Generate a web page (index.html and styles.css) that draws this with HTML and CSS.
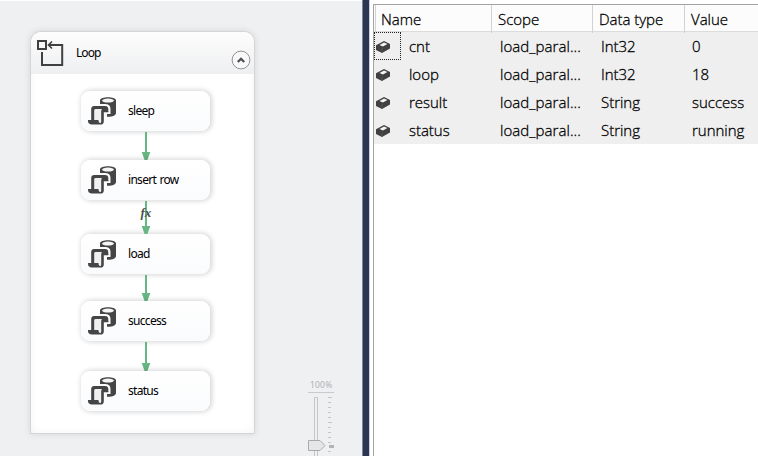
FILE: index.html
```
<!DOCTYPE html>
<html lang="en">
<head>
<meta charset="utf-8">
<title>Loop</title>
<link rel="stylesheet" href="styles.css">
</head>
<body>
<svg class="defs" width="0" height="0">
  <symbol id="task" viewBox="0 0 30 30">
    <path d="M12 4.5C12 .3 28 .3 28 4.5V17C28 19.5 24 21 19 20.7V15.5H21V10H12Z" fill="#454545"/>
    <ellipse cx="20" cy="4.6" rx="6" ry="2" fill="#f5f5f5"/>
    <path d="M9 9H17Q21.5 9 21.5 13V17H17" stroke="#fcfcfd" stroke-width="2" fill="none"/>
    <path d="M6 24V13Q6 11.5 8 11.5H16.5Q14.5 12.5 14.5 15V25.5Q14.5 28 12.5 28Q11 28 10.5 24Z" fill="#f0f0f1"/>
    <path d="M3.2 24V13Q3.2 10 6.2 10H17Q20.3 10 20.3 13V16.2H15.8V25.5Q15.8 28.6 12.5 28.6H4Q0 28.6 0 24.8V24H10.5Q10.5 27 12.3 27Q13.2 27 13.2 25.5V15Q13.2 13.8 14 13H8Q6.2 13 6.2 14V24Z" fill="#454545"/>
  </symbol>
  <symbol id="cube" viewBox="0 0 14 12">
    <path d="M0 4.2L8 0L14 3V7.5L6 12L0 9Z" fill="#414141"/>
    <path d="M3.5 3.9L8 1.5L11.4 3.1L6.9 5.4Z" fill="#f4f4f4"/>
    <path d="M6 7V12" stroke="#666" stroke-width=".6"/>
  </symbol>
</svg>
<main class="app">
  <section class="canvas">
    <div class="loop">
      <header class="loop-head">
        <svg class="loop-icon" width="27" height="27" viewBox="0 0 27 27" fill="none" stroke="#404040">
          <path d="M1 1H9V9H1Z M5 12V25H25.2V5H12" stroke-width="2"/>
          <path d="M15 1.5L11.5 5L15 8.5" stroke-width="1.6"/>
        </svg>
        <span class="loop-title">Loop</span>
        <svg class="collapse" width="20" height="20" viewBox="0 0 20 20" fill="none">
          <circle cx="10" cy="10" r="8.9" fill="#f8f8f9" stroke="#929294"/>
          <path d="M6.8 12L10 8.8L13.2 12" stroke="#505055" stroke-width="2.3"/>
        </svg>
      </header>
      <div class="flow">
        <div class="node"><svg class="task"><use href="#task"/></svg><span>sleep</span></div>
        <svg class="link" width="10" height="29" viewBox="0 0 10 29"><path d="M4 1H6V21H9.3L6.4 29H3.6L.7 21H4Z"/></svg>
        <div class="node"><svg class="task"><use href="#task"/></svg><span class="spaced">insert row</span></div>
        <div class="link-fx">
          <svg class="link" width="10" height="34" viewBox="0 0 10 34"><path d="M4 1H6V26H9.3L6.4 34H3.6L.7 26H4Z"/></svg>
          <span class="fx">fx</span>
        </div>
        <div class="node"><svg class="task"><use href="#task"/></svg><span>load</span></div>
        <svg class="link" width="10" height="27" viewBox="0 0 10 27"><path d="M4 1H6V19H9.3L6.4 27H3.6L.7 19H4Z"/></svg>
        <div class="node"><svg class="task"><use href="#task"/></svg><span>success</span></div>
        <svg class="link" width="10" height="30" viewBox="0 0 10 30"><path d="M4 1H6V22H9.3L6.4 30H3.6L.7 22H4Z"/></svg>
        <div class="node"><svg class="task"><use href="#task"/></svg><span>status</span></div>
      </div>
    </div>
    <div class="zoom">
      <span class="zoom-label">100%</span>
      <svg width="28" height="66" viewBox="0 0 28 66" fill="none">
        <path d="M0 2.5H26" stroke="#c9cacb"/>
        <path d="M6.5 70V7.5H9.5V70" stroke="#c5c6c7"/>
        <path d="M20 7.5H24M20 12.5H23M20 17.5H23M20 22.5H23M20 27.5H23M20 32.5H24M20 37.5H23M20 42.5H23M20 47.5H23M20 52.5H23M20 61.5H23" stroke="#c5c6c7"/>
        <path d="M21 56.5H26" stroke="#b2b3b4" stroke-width="3"/>
        <path d="M.5 50.5H12L17 55.5L12 60.5H.5Z" fill="#e5e6e7" stroke="#a9aaab"/>
      </svg>
    </div>
  </section>
  <div class="splitter"></div>
  <section class="locals">
    <div class="row head"><span>Name</span><span>Scope</span><span>Data type</span><span>Value</span></div>
    <div class="row"><span class="cell-name"><i class="focus"><svg class="cube"><use href="#cube"/></svg></i><b>cnt</b></span><span class="scope">load_paral...</span><span>Int32</span><span>0</span></div>
    <div class="row"><span class="cell-name"><i><svg class="cube"><use href="#cube"/></svg></i><b>loop</b></span><span class="scope">load_paral...</span><span>Int32</span><span>18</span></div>
    <div class="row"><span class="cell-name"><i><svg class="cube"><use href="#cube"/></svg></i><b>result</b></span><span class="scope">load_paral...</span><span>String</span><span>success</span></div>
    <div class="row"><span class="cell-name"><i><svg class="cube"><use href="#cube"/></svg></i><b>status</b></span><span class="scope">load_paral...</span><span>String</span><span>running</span></div>
  </section>
</main>
</body>
</html>
```
FILE: styles.css
```
* { box-sizing: border-box; }
body { margin: 0; background: #fff; color: #000; font-family: "Open Sans", "Noto Sans", sans-serif; }
.defs { position: absolute; }
.app { display: flex; width: 758px; height: 456px; overflow: hidden; }
.canvas { display: flex; width: 362px; flex: none; background: #eff0f2; border-top: 1px solid #fff; padding: 30px 0 0 30px; }
.loop { width: 225px; height: 403px; flex: none; border: 1px solid #d5d5d6; border-radius: 11px 11px 0 0; background: #fff; box-shadow: 0 0 7px rgba(0,0,0,.11), inset 0 0 8px rgba(0,0,0,.05); overflow: hidden; }
.loop-head { display: flex; height: 42px; padding: 8px 3px 0 6px; background: linear-gradient(#fdfdfd, #eeeff1); }
.loop-icon { flex: none; }
.loop-title { margin: 4px auto 0 12px; font: 11.5px/18px "Noto Sans", sans-serif; letter-spacing: -.95px; color: #000; }
.collapse { margin-top: 10px; }
.flow { display: flex; flex-direction: column; align-items: center; padding: 17px 0 0 6px; }
.node { display: flex; align-items: center; width: 129px; height: 40px; padding-left: 7px; border-radius: 9px; background: linear-gradient(#fff, #fafbfd); box-shadow: 1px 0 5px 1px rgba(0,0,0,.17); font: 11.5px/18px "Noto Sans", sans-serif; letter-spacing: -.7px; color: #000; }
.node span { margin: 0 0 1px 10px; }
.node .spaced { letter-spacing: -.7px; word-spacing: 1px; }
.node span:not(.spaced) { letter-spacing: -.7px; }
.loop-title, .node span { font-size: 12px; }
.task { width: 30px; height: 30px; flex: none; }
.link { display: block; flex: none; fill: #66b783; }
.link-fx { position: relative; height: 34px; }
.fx { position: absolute; left: 0; top: 4px; font: italic bold 13px/18px "Liberation Serif", serif; color: #4a4f4c; }
.zoom { display: flex; flex-direction: column; align-self: flex-end; width: 28px; margin-left: 53px; }
.zoom-label { margin-left: 2px; font: 8.5px/10px "Noto Sans", sans-serif; letter-spacing: .2px; color: #aeb0b2; }
.splitter { width: 8px; flex: none; background: #2a3654; border-left: 1px solid #7b8599; border-right: 1px solid #c6cddd; }
.locals { flex: 1; height: 456px; margin: 4px 0 0 3px; border: solid #a3a3a5; border-width: 1px 0 0 1px; background: #fff; }
.row { display: grid; grid-template-columns: 126px 101px 91px 1fr; height: 28px; background: #efefef; font-size: 15px; font-weight: 300; line-height: 28px; letter-spacing: -.03px; -webkit-text-stroke: .3px #000; white-space: nowrap; }
.row b { font-weight: 300; margin-left: 8px; }
.head { grid-template-columns: 116px 101px 92px 1fr; height: 27px; padding-left: 1px; background: #fcfcfc; border-bottom: 1px solid #dcdcdc; line-height: 28px; }
.head span { border-left: 1px solid #d2d2d2; padding-left: 6px; }
.head span:first-child { padding-left: 5px; }
.cell-name { display: flex; }
.row i { width: 27px; height: 28px; padding: 9px 0 0 2px; line-height: 0; }
.row .focus { border: 1px dotted #222; padding: 8px 0 0 1px; }
.cube { width: 14px; height: 12px; }
.row .scope { letter-spacing: .07px; }
```
